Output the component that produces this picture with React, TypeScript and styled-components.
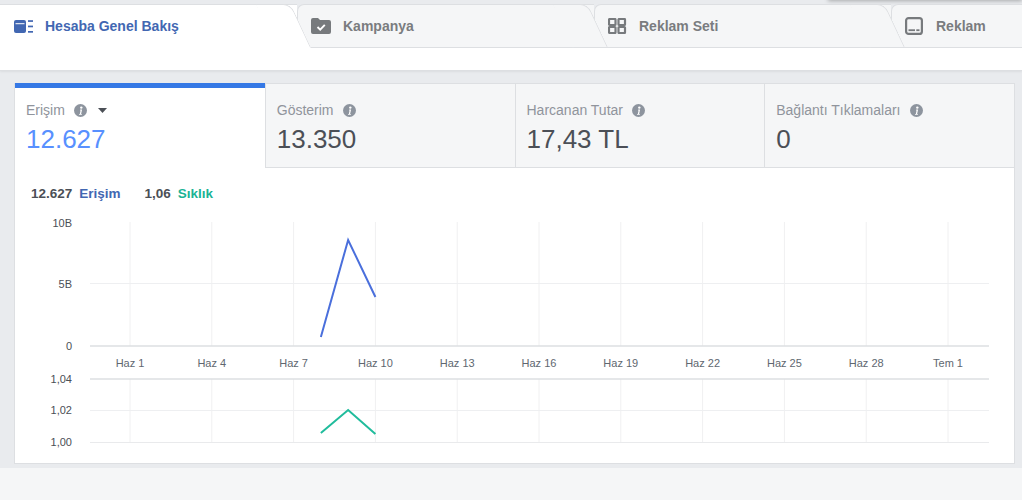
import React from "react";
import styled, { createGlobalStyle } from "styled-components";

const GlobalStyle = createGlobalStyle`
  body {
    margin: 0;
    background: #f5f6f7;
    font-family: "Liberation Sans", Arial, sans-serif;
  }
`;

const BLUE = "#4267b2";
const TEAL = "#1ab394";
const GREY_ICON = "#777a7d";

const HesabaIcon = () => (
  <svg width="19" height="13" viewBox="0 0 19 13">
    <rect x="0" y="0" width="12" height="13" rx="2" fill={BLUE} />
    <rect x="1.5" y="3.2" width="9" height="1" fill="#fff" />
    <rect x="14" y="0.2" width="5" height="1.7" fill={BLUE} />
    <rect x="14" y="5.6" width="5" height="1.7" fill={BLUE} />
    <rect x="14" y="11" width="5" height="1.7" fill={BLUE} />
  </svg>
);

const FolderIcon = () => (
  <svg width="20" height="16" viewBox="0 0 20 16">
    <path
      d="M0 2 a2 2 0 0 1 2 -2 h5 l2 2 h9 a2 2 0 0 1 2 2 v10 a2 2 0 0 1 -2 2 H2 a2 2 0 0 1 -2 -2 z"
      fill={GREY_ICON}
    />
    <polyline points="6.5,9 9.2,11.6 13.8,6.8" fill="none" stroke="#fff" strokeWidth="1.9" />
  </svg>
);

const GridIcon = () => (
  <svg width="19" height="16" viewBox="0 0 19 16">
    {[
      [1, 1],
      [10.5, 1],
      [1, 9],
      [10.5, 9],
    ].map(([x, y]) => (
      <rect
        key={`${x}-${y}`}
        x={x}
        y={y}
        width="6.5"
        height="6"
        rx="0.6"
        fill="none"
        stroke={GREY_ICON}
        strokeWidth="2.2"
      />
    ))}
  </svg>
);

const AdIcon = () => (
  <svg width="19" height="18" viewBox="0 0 19 18">
    <rect x="1.1" y="1.1" width="15.8" height="15.8" rx="2.5" fill="none" stroke={GREY_ICON} strokeWidth="2.2" />
    <rect x="3.5" y="12.3" width="6.5" height="1.8" fill={GREY_ICON} />
    <rect x="11.3" y="12.3" width="3.2" height="1.8" fill={GREY_ICON} />
  </svg>
);

const InfoIcon = () => (
  <svg width="13" height="13" viewBox="0 0 13 13">
    <circle cx="6.5" cy="6.5" r="6.5" fill="#8d949e" />
    <circle cx="7.3" cy="3.6" r="1.2" fill="#fff" />
    <path d="M6.2 5.6 h1.9 l-1 4.3 h0.9 l-0.2 0.9 h-2.9 l0.2 -0.9 h0.7 l0.8 -3.4 h-0.6 z" fill="#fff" />
  </svg>
);

const Caret = () => (
  <svg width="9" height="5" viewBox="0 0 9 5">
    <polygon points="0,0 9,0 4.5,5" fill="#4b4f56" />
  </svg>
);

const tabs = [
  { label: "Hesaba Genel Bakış", icon: <HesabaIcon /> },
  { label: "Kampanya", icon: <FolderIcon /> },
  { label: "Reklam Seti", icon: <GridIcon /> },
  { label: "Reklam", icon: <AdIcon /> },
];

const metrics = [
  { label: "Erişim", value: "12.627", caret: true },
  { label: "Gösterim", value: "13.350" },
  { label: "Harcanan Tutar", value: "17,43 TL" },
  { label: "Bağlantı Tıklamaları", value: "0" },
];

const ticks = ["Haz 1", "Haz 4", "Haz 7", "Haz 10", "Haz 13", "Haz 16", "Haz 19", "Haz 22", "Haz 25", "Haz 28", "Tem 1"];
const dayX = (day: number) => 130 + ((day - 1) * 81.8) / 3;

const reach = [
  { day: 8, v: 0.73 },
  { day: 9, v: 8.55 },
  { day: 10, v: 3.95 },
];
const freq = [
  { day: 8, v: 1.0057 },
  { day: 9, v: 1.0203 },
  { day: 10, v: 1.0051 },
];

const reachY = (v: number) => 345 - (v / 10) * 124;
const freqY = (v: number) => 441 - ((v - 1) / 0.04) * 63;

const Chart = () => {
  const xs = ticks.map((_, i) => 130 + i * 81.8);
  return (
    <ChartSvg width="999" height="256" viewBox="15 206 999 256">
      {xs.map((x) => (
        <line key={`a${x}`} x1={x} x2={x} y1={221} y2={345} stroke="#f0f0f1" strokeWidth="1" />
      ))}
      {xs.map((x) => (
        <line key={`b${x}`} x1={x} x2={x} y1={378} y2={441} stroke="#f0f0f1" strokeWidth="1" />
      ))}
      <line x1={90} x2={989} y1={282.5} y2={282.5} stroke="#eeeff1" />
      <line x1={90} x2={989} y1={345} y2={345} stroke="#dddfe2" strokeWidth="1.6" />
      <line x1={90} x2={989} y1={378} y2={378} stroke="#dddfe2" strokeWidth="1.6" />
      <line x1={90} x2={989} y1={409.5} y2={409.5} stroke="#eeeff1" />
      <line x1={90} x2={989} y1={441.5} y2={441.5} stroke="#e9eaec" />

      <g fontSize="11" fill="#4b4f56" textAnchor="end">
        <text x={72} y={226}>10B</text>
        <text x={72} y={287}>5B</text>
        <text x={72} y={349}>0</text>
        <text x={72} y={382}>1,04</text>
        <text x={72} y={413}>1,02</text>
        <text x={72} y={445}>1,00</text>
      </g>
      <g fontSize="11" fill="#606770" textAnchor="middle">
        {ticks.map((t, i) => (
          <text key={t} x={xs[i]} y={366}>
            {t}
          </text>
        ))}
      </g>

      <polyline
        points={reach.map((p) => `${dayX(p.day)},${reachY(p.v)}`).join(" ")}
        fill="none"
        stroke="#4a6fdc"
        strokeWidth="2"
      />
      <polyline
        points={freq.map((p) => `${dayX(p.day)},${freqY(p.v)}`).join(" ")}
        fill="none"
        stroke="#20bc9c"
        strokeWidth="2"
      />
    </ChartSvg>
  );
};

const App: React.FC = () => {
  return (
    <>
      <GlobalStyle />
      <Header>
        <TopShadow />
        <TabRow>
          {tabs.map((t, i) => (
            <Tab key={t.label} $active={i === 0} $z={tabs.length - i}>
              <TabIcon>{t.icon}</TabIcon>
              <TabLabel $active={i === 0}>{t.label}</TabLabel>
            </Tab>
          ))}
        </TabRow>
      </Header>
      <Strip />
      <Body>
        <Card>
          <MetricRow>
            {metrics.map((m, i) => (
              <Metric key={m.label} $active={i === 0}>
                <MetricLabel>
                  {m.label}
                  <InfoWrap>
                    <InfoIcon />
                  </InfoWrap>
                  {m.caret && (
                    <CaretWrap>
                      <Caret />
                    </CaretWrap>
                  )}
                </MetricLabel>
                <MetricValue $active={i === 0}>{m.value}</MetricValue>
              </Metric>
            ))}
          </MetricRow>
          <Legend>
            <LegendItem>
              <LegendNum>12.627</LegendNum>
              <LegendName $color={BLUE}>Erişim</LegendName>
            </LegendItem>
            <LegendItem>
              <LegendNum>1,06</LegendNum>
              <LegendName $color={TEAL}>Sıklık</LegendName>
            </LegendItem>
          </Legend>
          <Chart />
        </Card>
      </Body>
    </>
  );
};

const Header = styled.div`
  position: relative;
  background: #e9ebee;
  padding-top: 4px;
  overflow: hidden;
`;

const TopShadow = styled.div`
  position: absolute;
  top: -20px;
  left: 828px;
  right: 0;
  height: 20px;
  box-shadow: 0 1px 4px rgba(0, 0, 0, 0.28);
`;

const TabRow = styled.div`
  display: flex;
  height: 44px;
`;

const Tab = styled.div<{ $active?: boolean; $z: number }>`
  position: relative;
  z-index: ${(p) => p.$z};
  flex: 0 0 297px;
  box-sizing: border-box;
  display: flex;
  align-items: center;
  padding-left: ${(p) => (p.$active ? 14 : 13)}px;
  background: ${(p) => (p.$active ? "#fff" : "#f5f6f7")};
  border-top: 1px solid #dddfe2;
  border-left: ${(p) => (p.$active ? "none" : "1px solid #dddfe2")};
  border-bottom: 1px solid ${(p) => (p.$active ? "#fff" : "#dddfe2")};
  border-top-left-radius: ${(p) => (p.$active ? 0 : 7)}px;

  &::after {
    content: "";
    position: absolute;
    top: -1px;
    bottom: -1px;
    right: -4px;
    width: 34px;
    background: ${(p) => (p.$active ? "#fff" : "#f5f6f7")};
    border-top: 1px solid #dddfe2;
    border-right: 1px solid #dddfe2;
    border-bottom: 1px solid ${(p) => (p.$active ? "#fff" : "#dddfe2")};
    border-top-right-radius: 8px;
    transform: skewX(25deg);
    z-index: -1;
  }
`;

const TabIcon = styled.span`
  display: flex;
  align-items: center;
  margin-right: 12px;
`;

const TabLabel = styled.span<{ $active?: boolean }>`
  font-size: 14px;
  font-weight: bold;
  color: ${(p) => (p.$active ? BLUE : "#7a7c7f")};
  white-space: nowrap;
`;

const Strip = styled.div`
  height: 22px;
  background: #fff;
  border-bottom: 1px solid #dddfe2;
  box-shadow: 0 1px 2px rgba(0, 0, 0, 0.06);
  position: relative;
`;

const Body = styled.div`
  background: #e9ebee;
  padding: 12px 7px 4px 14px;
`;

const Card = styled.div`
  background: #fff;
  border: 1px solid #dddfe2;
`;

const MetricRow = styled.div`
  display: grid;
  grid-template-columns: repeat(4, 1fr);
`;

const Metric = styled.div<{ $active?: boolean }>`
  box-sizing: border-box;
  padding: 17px 12px 0 11px;
  background: ${(p) => (p.$active ? "#fff" : "#f5f6f7")};
  border-bottom: 1px solid ${(p) => (p.$active ? "#fff" : "#dddfe2")};
  border-left: ${(p) => (p.$active ? "none" : "1px solid #dddfe2")};
  box-shadow: ${(p) => (p.$active ? "inset 0 5px 0 #3578e5" : "none")};
  margin-top: ${(p) => (p.$active ? "-1px" : "0")};
  padding-top: ${(p) => (p.$active ? 18 : 17)}px;
  height: ${(p) => (p.$active ? 85 : 84)}px;
`;

const MetricLabel = styled.div`
  display: flex;
  align-items: center;
  height: 18px;
  font-size: 14px;
  color: #90949c;
  white-space: nowrap;
`;

const InfoWrap = styled.span`
  display: flex;
  margin-left: 9px;
`;

const CaretWrap = styled.span`
  display: flex;
  margin-left: 11px;
`;

const MetricValue = styled.div<{ $active?: boolean }>`
  margin-top: 5px;
  font-size: 26px;
  line-height: 30px;
  color: ${(p) => (p.$active ? "#5890ff" : "#4b4f56")};
`;

const Legend = styled.div`
  display: flex;
  gap: 24px;
  margin-top: 18px;
  padding-left: 16px;
  line-height: 16px;
  font-size: 13.5px;
  font-weight: bold;
`;

const LegendItem = styled.div`
  display: flex;
  gap: 7px;
`;

const LegendNum = styled.span`
  color: #4b4f56;
`;

const LegendName = styled.span<{ $color: string }>`
  color: ${(p) => p.$color};
`;

const ChartSvg = styled.svg`
  display: block;
  margin-top: 5px;
  font-family: "Liberation Sans", Arial, sans-serif;
`;

export default App;
